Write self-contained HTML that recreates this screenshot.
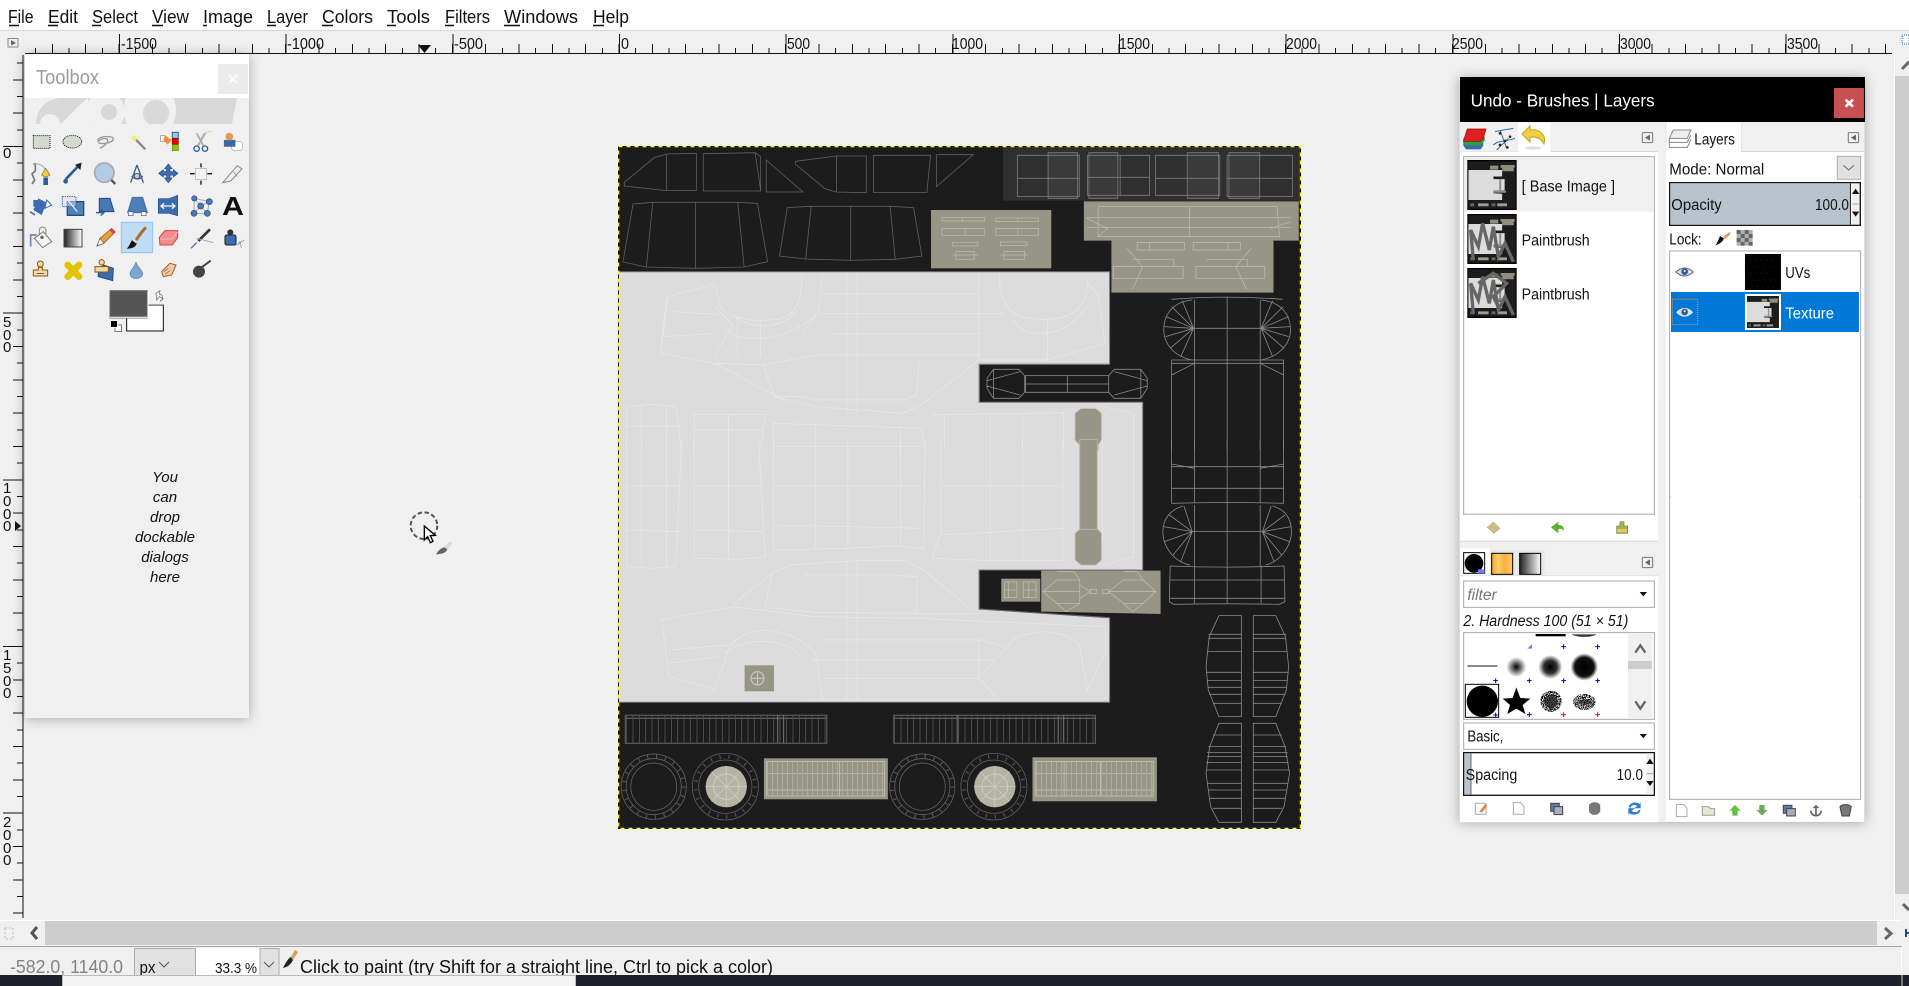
<!DOCTYPE html>
<html><head><meta charset="utf-8"><title>GIMP</title>
<style>
html,body{margin:0;padding:0;width:1909px;height:986px;overflow:hidden;background:#f0f0f0}
svg{display:block;position:absolute;left:0;top:0}
text{font-family:"Liberation Sans",sans-serif;fill:#111}
.w *{vector-effect:non-scaling-stroke}
.w{fill:none}
.r text{font-size:16px}
.v text{font-size:15px}
.m text{font-size:18px}
.d text{font-size:46px}
.lt{stroke:#ebebeb;stroke-width:.6}
</style></head><body>
<svg width="1909" height="986" viewBox="0 0 1909 986" xmlns="http://www.w3.org/2000/svg">
<defs>
<filter id="sh" x="-15%" y="-15%" width="130%" height="130%"><feDropShadow dx="0" dy="1" stdDeviation="6" flood-color="#000" flood-opacity=".3"/></filter>
<filter id="nz" x="0" y="0" width="100%" height="100%"><feTurbulence type="fractalNoise" baseFrequency=".35" numOctaves="2" seed="4"/><feColorMatrix values="0 0 0 0 0 0 0 0 0 0 0 0 0 0 0 0 0 0 14 -6.200"/><feComposite in2="SourceGraphic" operator="in"/></filter>
<linearGradient id="gr" x1="0" x2="1" y1="0" y2="0"><stop offset="0" stop-color="#222"/><stop offset="1" stop-color="#fff"/></linearGradient>
<linearGradient id="or" x1="0" x2="1"><stop offset="0" stop-color="#f7a020"/><stop offset=".3" stop-color="#ffd070"/><stop offset=".6" stop-color="#f9b040"/><stop offset="1" stop-color="#ffc860"/></linearGradient>
<radialGradient id="b1"><stop offset="0" stop-color="#000"/><stop offset=".35" stop-color="#555"/><stop offset="1" stop-color="#fff"/></radialGradient>
<radialGradient id="b2"><stop offset="0" stop-color="#000"/><stop offset=".55" stop-color="#333"/><stop offset="1" stop-color="#fff"/></radialGradient>
<radialGradient id="b3"><stop offset="0" stop-color="#000"/><stop offset=".7" stop-color="#111"/><stop offset="1" stop-color="#fff"/></radialGradient>
<symbol id="th" viewBox="0 0 49 49">
<rect width="49" height="49" fill="#1c1c1c"/>
<path d="M0 9H35V15.700H26V18.400H37.600V30.400H26V33L35 33.600V40H0Z" fill="#dcdcdc"/>
<path d="M22.500 4.400H31V8.600H22.500ZM33.400 3.800H48V6.600H47V10.300H35V6.600H33.400Z" fill="#8f8d7e"/>
<rect x="32" y="18.600" width="2" height="11.500" fill="#8f8d7e"/>
<path d="M26 31.500H39" stroke="#8f8d7e" stroke-width="2" fill="none"/>
<path d="M10 45H21M30 45H40" stroke="#a09e8e" stroke-width="3"/>
<path d="M2 45H6M24 45H28" stroke="#666" stroke-width="3"/>
</symbol>
</defs>

<!-- menu bar -->
<rect width="1909" height="30" fill="#fff"/>
<rect y="30" width="1909" height="1" fill="#d8d8d8"/>
<g class="m">
<text x="8" y="23" textLength="25.500" lengthAdjust="spacingAndGlyphs">File</text>
<text x="48" y="23" textLength="30" lengthAdjust="spacingAndGlyphs">Edit</text>
<text x="92" y="23" textLength="46" lengthAdjust="spacingAndGlyphs">Select</text>
<text x="152" y="23" textLength="37" lengthAdjust="spacingAndGlyphs">View</text>
<text x="203" y="23" textLength="50" lengthAdjust="spacingAndGlyphs">Image</text>
<text x="267" y="23" textLength="41" lengthAdjust="spacingAndGlyphs">Layer</text>
<text x="322" y="23" textLength="51" lengthAdjust="spacingAndGlyphs">Colors</text>
<text x="387" y="23" textLength="43" lengthAdjust="spacingAndGlyphs">Tools</text>
<text x="445" y="23" textLength="45" lengthAdjust="spacingAndGlyphs">Filters</text>
<text x="504" y="23" textLength="74" lengthAdjust="spacingAndGlyphs">Windows</text>
<text x="593" y="23" textLength="36" lengthAdjust="spacingAndGlyphs">Help</text>
</g>
<path d="M9 25.500H19M48 25.500H58M92 25.500H101M152 25.500H163M203 25.500H207M267 25.500H276M322 25.500H333M387 25.500H396M445 25.500H454M504 25.500H520M593 25.500H604" stroke="#111" stroke-width="1.500"/>

<!-- rulers -->
<g stroke="#111" shape-rendering="crispEdges" fill="none">
<path d="M26 53.500H1892"/>
<path d="M23 55V918" />
<path d="M35.200 50.500H1892" stroke-width="5" stroke-dasharray="1 32.330"/>
<path d="M51.900 48.500H1892" stroke-width="9" stroke-dasharray="1 32.330"/>
<path d="M119 43.500H1892" stroke-width="19" stroke-dasharray="1 165.670"/>
<path d="M20 62.700V918" stroke-width="6" stroke-dasharray="1 32.330"/>
<path d="M18 79.400V918" stroke-width="10" stroke-dasharray="1 32.330"/>
<path d="M13 146V918" stroke-width="20" stroke-dasharray="1 165.670"/>
</g>
<g class="r">
<text x="121" y="49" textLength="36" lengthAdjust="spacingAndGlyphs">-1500</text>
<text x="287" y="49" textLength="37" lengthAdjust="spacingAndGlyphs">-1000</text>
<text x="454" y="49" textLength="29" lengthAdjust="spacingAndGlyphs">-500</text>
<text x="621" y="49" textLength="8" lengthAdjust="spacingAndGlyphs">0</text>
<text x="787" y="49" textLength="23" lengthAdjust="spacingAndGlyphs">500</text>
<text x="952" y="49" textLength="31" lengthAdjust="spacingAndGlyphs">1000</text>
<text x="1119" y="49" textLength="31" lengthAdjust="spacingAndGlyphs">1500</text>
<text x="1286" y="49" textLength="31" lengthAdjust="spacingAndGlyphs">2000</text>
<text x="1452" y="49" textLength="31" lengthAdjust="spacingAndGlyphs">2500</text>
<text x="1620" y="49" textLength="31" lengthAdjust="spacingAndGlyphs">3000</text>
<text x="1787" y="49" textLength="31" lengthAdjust="spacingAndGlyphs">3500</text>
</g>
<path d="M418 45H431L424.500 53Z" fill="#111"/>
<g class="v">
<text x="3" y="158">0</text>
<text x="3" y="327">5</text><text x="3" y="340">0</text><text x="3" y="352">0</text>
<text x="3" y="493">1</text><text x="3" y="506">0</text><text x="3" y="519">0</text><text x="3" y="531">0</text>
<text x="3" y="660">1</text><text x="3" y="673">5</text><text x="3" y="686">0</text><text x="3" y="698">0</text>
<text x="3" y="827">2</text><text x="3" y="840">0</text><text x="3" y="853">0</text><text x="3" y="865">0</text>
</g>
<path d="M8 47V38.500H18V47Z" fill="#eee" stroke="#888"/><path d="M11 40L16 43L11 45.500Z" fill="#666"/>
<path d="M15 521L21 526L15 531Z" fill="#111"/>

<!-- canvas -->
<rect x="618.500" y="146.500" width="682" height="682" fill="#1c1c1c"/>
<path d="M618.400 271.700H1109.600V364.300H979.200V402.300H1142.700V570H979.200V609L1109.600 617.700V702.300H618.400Z" fill="#dcdcdc" stroke="#777" stroke-width="1"/>
<path d="M979.200 570V609L1109.600 617.700" fill="none" stroke="#666"/>

<!-- group A wires -->
<g class="w" transform="translate(600,130) scale(.4591,.3333)">
<rect x="878" y="50" width="647" height="162" fill="#2f2f2f"/>
<g fill="#3a3a3a" stroke="none"><rect x="976" y="68" width="68" height="137"/><rect x="1065" y="68" width="63" height="137"/><rect x="1279" y="68" width="68" height="137"/><rect x="1370" y="68" width="67" height="137"/></g>
<g stroke="#7c7c7c" stroke-width=".8">
<path d="M909 76H1044V200H909ZM976 68H1040V205H976ZM909 145H1044M1062 76H1197V196H1062ZM1065 68V205H1128V68ZM1133 76V196M1062 142H1197M1210 76H1350V196H1210ZM1279 68H1347V205H1279ZM1210 145H1350M1366 76H1508V200H1366ZM1370 68H1437V205H1370ZM1366 145H1508"/>
</g>
<g stroke="#5f5f5f" stroke-width=".8">
<path d="M53 157L118 83L145 72L210 70V182H145L53 168ZM145 72V181M225 71L338 68L350 80V183H225ZM338 68L350 183M362 90L442 186H362ZM426 94L515 78H580V188L515 186L490 176L426 103ZM515 78V186M596 76H720L712 188H596ZM733 74H813L733 170Z"/>
<path d="M50 396L72 222L115 217H300L343 220L365 395L314 411L208 415L101 411ZM115 217L101 411M208 217V415M300 217L314 411M391 378L408 233L460 229H632L683 233L701 378L643 388L546 391L448 387ZM460 229L448 387M546 229V391M632 229L643 388"/>
</g>
<rect x="721" y="240" width="262" height="175" fill="#979585"/>
<path d="M1054 214H1522V332H1467V488H1114V332H1054Z" fill="#979585"/>
<g stroke="#bdbcae" stroke-width=".7">
<path d="M745 262H838V273H745ZM862 264H955V275H862ZM745 296H838V316H745ZM862 296H955V316H862ZM790 262V273M910 264V275M795 296V316M910 296V316M768 337H823V348H768ZM872 336H930V347H872ZM775 365H815V388H775ZM880 365H925V388H880ZM768 375H825M872 375H932"/>
<path d="M1085 230H1475L1480 320H1085ZM1060 262H1505M1060 292H1505M1284 230V320M1060 265L1105 295L1085 320M1505 275L1460 295M1170 338H1273V360H1170ZM1292 338H1395V360H1292ZM1197 338V362M1368 338V362M1118 410H1270V445H1118ZM1298 410H1448V445H1298ZM1160 388H1250V410M1320 388H1410V410M1148 355L1182 410L1160 478M1418 355L1385 410L1408 478M1180 445H1260M1310 445H1385"/>
</g>
<!-- car top -->
<g class="lt">
<path d="M148 500L250 463L262 530C275 560 330 578 370 570C420 570 440 530 440 432M485 432L475 550L440 610M148 500L132 670L250 700L355 705L470 675M160 545L255 553M140 620L250 610M250 530L290 585L250 675M290 555C320 600 400 600 430 540M270 600C320 640 400 640 470 555M538 432V850M560 432V850M485 490H825M480 550H880M500 610H830M825 432V690M870 432C870 540 900 570 975 568C1040 565 1060 520 1062 458L1085 495L1100 640L975 690L830 690M900 570C920 625 1010 635 1060 530M470 675H830M355 705L380 800L470 830L660 850L700 825L825 690M250 700L420 825M380 800L440 800L470 810H660L690 795L695 690M300 560V680M350 570V680M975 568V690M145 500L132 670"/>
<path d="M58 830L110 823L165 830L178 960M58 830V960M90 826V960M145 826V960M205 853H360L350 960M205 853V960M280 853V960M378 880L700 895L708 960M378 880V960M470 885V960M655 892V960M723 855L1010 848V960M750 855V960M850 850V960M920 850V960M1095 830L1162 850V960M55 890H178M205 900H355M378 950H705"/>
</g>
<!-- bar dark -->
<rect x="826" y="703" width="356" height="114" fill="#1c1c1c"/>
<path d="M1110 703H826V817H1182" stroke="#8a8a8a" stroke-width="1"/>
<g stroke="#8a8a8a" stroke-width=".8">
<path d="M843 745L857 718H912L925 737V787L912 805H857L843 775ZM927 737H1108V787H927ZM1108 737L1120 718H1178L1192 745V775L1178 805H1120L1108 787ZM927 762H1108M1018 737V787M843 752L915 725M843 768L915 795M1192 752L1120 725M1192 768L1120 795M857 718V805M1178 718V805"/>
</g>
<path d="M1035 850L1048 836H1080L1092 850V930L1085 945V960H1045V945L1035 930Z" fill="#979585" stroke="#b8b7a8" stroke-width=".8"/>
<!-- right body -->
<g stroke="#8a8a8a" stroke-width=".8">
<path d="M1245 508Q1366 495 1487 508M1290 510C1250 515 1228 550 1228 600C1228 640 1250 680 1290 690M1440 510C1480 515 1504 550 1504 600C1504 640 1480 680 1440 690"/>
<path d="M1293 595L1245 530M1293 595L1233 560M1293 595L1228 590M1293 595L1232 620M1293 595L1242 655M1293 595L1265 680M1293 595L1268 512M1440 595L1488 530M1440 595L1500 560M1440 595L1504 590M1440 595L1500 620M1440 595L1490 655M1440 595L1465 680M1440 595L1465 512"/>
<path d="M1245 690H1489M1245 700H1489M1245 690V960M1295 510V960M1366 500V960M1438 510V960M1489 690V960M1293 595H1440M1245 735L1295 700M1489 735L1438 700"/>
</g>
</g>

<!-- group B wires -->
<g class="w" transform="translate(600,440) scale(.4591,.3333)">
<g class="lt">
<path d="M58 0V380L110 385L165 380L178 0M90 0V380M145 0V380M205 0V355L305 358L360 350L345 0M280 0V358M378 0V330L540 325L640 318L705 325L708 0M470 0V325M540 0V325M655 0V320M742 0V280L723 355L850 362H1008V0M850 0V362M920 0V362M55 138H180M205 138H350M375 138H708M745 138H1008M55 270L178 275M205 270L355 275M378 255L700 265M740 285L1008 265M1095 0V300M1162 0V350L1095 375"/>
<path d="M290 492L375 400L415 375L560 362L660 362L700 385L810 510M380 505L470 517L690 520L820 520M132 540L290 500L470 530L690 535L1100 560V640L1060 755M135 540L150 710L250 748L280 630C300 560 400 540 470 640L485 780M440 780H870L825 715L900 600C950 560 1020 570 1045 620L1062 755M150 630L280 615M150 670L260 650M480 600H830L880 620M460 660H860M490 715H825M538 362V780M560 362V780M825 600V715M270 640C320 590 400 590 440 650M375 400L360 505M690 400V520M445 405H640L690 410"/>
</g>
<rect x="315" y="676" width="64" height="78" fill="#979585"/>
<ellipse cx="343" cy="715" rx="14" ry="20" stroke="#ccc"/><path d="M329 715H357M343 695V735" stroke="#ccc"/>
<!-- bar tan -->
<rect x="874" y="416" width="85" height="69" fill="#979585"/>
<path d="M881 426H908V473H881ZM922 426H950V473H922ZM890 426V473M934 426V473M881 450H908M922 450H950" stroke="#c0bfb1" stroke-width=".7"/>
<path d="M961 392H1221V522L961 515Z" fill="#979585"/>
<path d="M965 455L995 420H1045V490H995ZM995 395H1032L1045 420M995 490L1015 515L1045 490M1045 435L1068 455L1045 475M1068 448H1081V461H1068ZM1095 448H1108V461H1095ZM1108 455L1140 420H1183L1210 455L1183 490H1140ZM1140 395H1170L1183 420M1140 490L1160 515L1183 490M965 455H1045M1108 455H1210" stroke="#c0bfb1" stroke-width=".7"/>
<path d="M1035 280L1048 265H1082V20H1045V265H1082L1092 280V360L1080 375H1048L1035 360Z" fill="#979585" stroke="#b8b7a8" stroke-width=".8"/>
<rect x="1045" y="-2" width="38" height="270" fill="#979585" stroke="#b8b7a8" stroke-width=".8"/>
<!-- right -->
<g stroke="#8a8a8a" stroke-width=".8">
<path d="M1245 0V190M1295 0V190M1366 0V490M1438 0V190M1489 0V190M1245 190Q1366 185 1489 190M1245 80H1489M1245 145H1489M1245 72L1295 85M1489 72L1438 85"/>
<path d="M1270 198C1240 210 1226 240 1226 275C1226 320 1250 365 1285 375M1465 198C1495 210 1506 240 1506 275C1506 320 1480 365 1450 375M1290 275L1272 198M1290 275L1240 225M1290 275L1228 260M1290 275L1230 305M1290 275L1248 345M1290 275L1265 365M1443 275L1462 198M1443 275L1492 225M1443 275L1505 260M1443 275L1502 305M1443 275L1485 345M1443 275L1468 365M1290 275H1443M1295 195V378M1438 195V378"/>
<path d="M1242 378Q1366 385 1490 378L1492 485L1480 493Q1366 490 1250 493L1240 485ZM1295 378V490M1440 378V490M1242 420H1492M1242 475H1492"/>
<path d="M1348 527H1397V830H1348L1325 750L1320 680L1327 590ZM1472 527H1423V830H1472L1495 750L1500 680L1493 590ZM1325 583H1397M1325 595H1397M1322 635H1397M1320 697H1397M1322 722H1397M1325 742H1397M1327 763H1397M1335 790H1397M1423 583H1495M1423 595H1495M1423 635H1497M1423 697H1500M1423 722H1497M1423 742H1495M1423 763H1493M1423 790H1485"/>
<path d="M1348 850H1397V1147H1348L1330 1100L1320 1000L1328 920ZM1472 850H1423V1147H1472L1490 1100L1502 1000L1492 920ZM1335 885H1397M1325 920H1397M1322 938H1397M1322 950H1397M1320 968H1397M1320 990H1397M1322 1030H1397M1325 1050H1397M1328 1075H1397M1335 1105H1397M1423 885H1485M1423 920H1495M1423 938H1498M1423 950H1498M1423 968H1500M1423 990H1502M1423 1030H1498M1423 1050H1496M1423 1075H1492M1423 1105H1485"/>
</g>
<!-- wheels -->
<g stroke="#6a6a6a" stroke-width=".7">
<ellipse cx="117" cy="1040" rx="71" ry="98"/><ellipse cx="117" cy="1040" rx="60" ry="84"/><ellipse cx="117" cy="1040" rx="50" ry="71"/>
<ellipse cx="702" cy="1040" rx="71" ry="98"/><ellipse cx="702" cy="1040" rx="60" ry="84"/><ellipse cx="702" cy="1040" rx="50" ry="71"/>
<ellipse cx="273" cy="1040" rx="72" ry="100"/><ellipse cx="273" cy="1040" rx="58" ry="80"/>
<ellipse cx="858" cy="1040" rx="72" ry="100"/><ellipse cx="858" cy="1040" rx="58" ry="80"/>
</g>
<g fill="none" stroke="#5a5a5a">
<ellipse cx="117" cy="1040" rx="65" ry="91" stroke-width="4" stroke-dasharray="1 8"/>
<ellipse cx="702" cy="1040" rx="65" ry="91" stroke-width="4" stroke-dasharray="1 8"/>
<ellipse cx="273" cy="1040" rx="65" ry="90" stroke-width="4" stroke-dasharray="1 8"/>
<ellipse cx="858" cy="1040" rx="65" ry="90" stroke-width="4" stroke-dasharray="1 8"/>
</g>
<ellipse cx="275" cy="1040" rx="45" ry="62" fill="#b5b3a3"/><ellipse cx="860" cy="1040" rx="45" ry="62" fill="#b5b3a3"/>
<path d="M275 978V1102M230 1040H320M243 995L307 1085M307 995L243 1085M860 978V1102M815 1040H905M828 995L892 1085M892 995L828 1085" stroke="#d0cec0" stroke-width=".7"/>
<ellipse cx="275" cy="1040" rx="28" ry="38" stroke="#d0cec0"/><ellipse cx="860" cy="1040" rx="28" ry="38" stroke="#d0cec0"/>
<rect x="357" y="955" width="270" height="123" fill="#979585"/>
<rect x="942" y="952" width="271" height="132" fill="#979585"/>
<path d="M363 965H620V1068H363ZM363 1050H620M363 1000H620M522 965V1068M948 965H1205V1068H948ZM948 1050H1205M948 1000H1205M1011 965V1068M1090 965V1068" stroke="#c9c8ba" stroke-width=".7"/>
<rect x="55" y="826" width="439" height="84" stroke="#666"/>
<rect x="640" y="826" width="439" height="84" stroke="#666"/>
<path d="M55 835H494M640 835H1079M387 826V910M400 826V910M778 826V910M998 826V910M1010 826V910" stroke="#777"/>
</g>
<!-- dash fills -->
<g fill="none" shape-rendering="crispEdges">
<path d="M626 729.300H826.500M894 729.300H1095" stroke="#4a4a4a" stroke-width="27" stroke-dasharray="1 5.400"/>
<path d="M767 779H884M1036 779H1153" stroke="#aeac9c" stroke-width="34" stroke-dasharray="1 4"/>
</g>
<!-- marching ants -->
<rect x="618.500" y="146.500" width="682" height="682" fill="none" stroke="#000" stroke-width="1"/>
<rect x="618.500" y="146.500" width="682" height="682" fill="none" stroke="#ff0" stroke-width="1.500" stroke-dasharray="4 4"/>

<!-- cursor -->
<g transform="translate(370,490) scale(.3333)">
<circle cx="162" cy="107" r="40" fill="none" stroke="#555" stroke-width="6" stroke-dasharray="13 8"/>
<path d="M163 108V150L173 140L181 158L189 154L181 137L196 136Z" fill="#fff" stroke="#000" stroke-width="4"/>
<path d="M198 193C205 180 215 172 225 172L232 178C228 188 218 192 198 193Z" fill="#666"/>
<path d="M225 172L240 155L245 160L232 178Z" fill="#ddd" stroke="#bbb"/>
</g>

<!-- toolbox -->
<rect x="25" y="54" width="224" height="664" fill="#f0f0f0" filter="url(#sh)"/>
<!-- wilber -->
<path d="M36 124C36 108 48 98 62 98H237L232 124Z" fill="#d8d8d8"/>
<circle cx="50" cy="124" r="10" fill="#f0f0f0"/>
<path d="M60 124C68 118 75 108 88 98V124Z" fill="#f0f0f0"/>
<circle cx="105" cy="112" r="20" fill="#f0f0f0"/>
<circle cx="109" cy="112" r="8" fill="#d8d8d8"/>
<ellipse cx="150" cy="110" rx="26" ry="30" fill="#f0f0f0"/>
<circle cx="156" cy="113" r="13" fill="#d8d8d8"/>
<rect x="25" y="124" width="224" height="4" fill="#f0f0f0"/>
<rect x="25" y="54" width="224" height="44" fill="#fff"/>
<rect x="25" y="53" width="224" height="1" fill="#111"/>
<text x="36" y="84" font-size="20" style="fill:#9c9c9c" textLength="63" lengthAdjust="spacingAndGlyphs">Toolbox</text>
<rect x="218" y="64" width="30" height="30" fill="#ebebeb"/>
<path d="M229 75L237 83M237 75L229 83" stroke="#fafafa" stroke-width="2"/>

<!-- tool icons in 3x coords -->
<g transform="translate(0,100) scale(.3333)">
<!-- row 1 -->
<rect x="100" y="107" width="50" height="38" fill="#d5d8d0" stroke="#111" stroke-width="3" stroke-dasharray="3 3"/>
<ellipse cx="217" cy="125" rx="28" ry="19" fill="#d5d8d0" stroke="#111" stroke-width="3" stroke-dasharray="3 3"/>
<path d="M293 122C295 108 335 106 340 115C342 128 310 132 300 130C290 128 298 115 318 116C330 118 320 135 300 145" fill="none" stroke="#999" stroke-width="4"/>
<path d="M405 116L436 148" stroke="#888" stroke-width="7"/><circle cx="403" cy="114" r="8" fill="#f7ec6a"/>
<rect x="482" y="107" width="14" height="18" fill="#fff" stroke="#888" stroke-width="2"/>
<path d="M495 106L515 120L503 134L490 120Z" fill="#f09030"/>
<rect x="517" y="97" width="18" height="18" fill="#9cc" stroke="#2a5f9e" stroke-width="3"/>
<rect x="517" y="116" width="18" height="17" fill="#e00" stroke="#a00" stroke-width="2"/>
<rect x="517" y="134" width="18" height="18" fill="#8c0" stroke="#5a8a00" stroke-width="2"/>
<path d="M590 100L612 140M616 100L592 140" stroke="#aaa" stroke-width="5"/>
<circle cx="590" cy="146" r="8" fill="none" stroke="#2a5f9e" stroke-width="4"/><circle cx="615" cy="146" r="8" fill="none" stroke="#2a5f9e" stroke-width="4"/>
<path d="M603 115C606 100 618 96 636 94" fill="none" stroke="#e08a20" stroke-width="2" stroke-dasharray="3 2"/>
<rect x="695" y="125" width="32" height="27" rx="8" fill="#fff" stroke="#aaa" stroke-width="2"/>
<rect x="672" y="120" width="34" height="20" fill="#3a6aa8" stroke="#a44" stroke-dasharray="2 2"/>
<circle cx="688" cy="110" r="11" fill="#e89a40" stroke="#a66" stroke-dasharray="2 2"/>
<!-- row 2 -->
<path d="M100 192H106V212L96 222L104 240L96 252" fill="none" stroke="#777" stroke-width="5"/><path d="M100 195C115 188 130 195 135 208" fill="none" stroke="#aaa" stroke-width="3"/>
<path d="M137 205L150 225L137 232L125 225Z" fill="#f0d030" stroke="#666" stroke-width="2"/><rect x="130" y="233" width="14" height="22" fill="#2a5f9e"/>
<path d="M238 195L197 238" stroke="#2a5f9e" stroke-width="8"/><path d="M228 195L240 207L243 190Z" fill="#222" stroke="#222" stroke-width="3"/><circle cx="197" cy="244" r="7" fill="#2a5f9e"/>
<circle cx="313" cy="218" r="29" fill="#b4cbe8" stroke="#aaa" stroke-width="5"/><path d="M334 240L346 252" stroke="#555" stroke-width="7"/>
<path d="M411 195L392 248M411 195L430 248M395 228C405 240 420 240 428 228" fill="none" stroke="#3a5f8f" stroke-width="4"/><circle cx="411" cy="228" r="8" fill="#ccd" stroke="#555" stroke-width="3"/>
<path d="M505 192L516 206H510V215H520V209L534 220L520 231V225H510V234H516L505 248L494 234H500V225H490V231L476 220L490 209V215H500V206H494Z" fill="#3d70b2" stroke="#1f4a86" stroke-width="2"/>
<rect x="587" y="205" width="33" height="33" fill="#f4f4f4" stroke="#aaa" stroke-width="2"/>
<path d="M603 190V202M603 242V254M570 221H584M622 221H636" stroke="#111" stroke-width="4"/>
<path d="M668 248L712 197L726 207L692 243Z" fill="#eee" stroke="#888" stroke-width="3"/><path d="M700 215L712 230" stroke="#888" stroke-width="2"/>
<!-- row 3 -->
<path d="M115 295L140 308L125 345L100 330Z" fill="#3c6cae"/><path d="M100 300H125V320H100Z" fill="#3c6cae"/><path d="M140 300L155 315L135 325Z" fill="#fff" stroke="#3c6cae" stroke-width="3"/><path d="M90 335L105 345" stroke="#3c6cae" stroke-width="5"/>
<rect x="202" y="305" width="49" height="41" fill="#5080b8" stroke="#1f4a86" stroke-width="4"/>
<rect x="187" y="290" width="41" height="30" fill="#dde" fill-opacity=".5" stroke="#2a5f9e" stroke-width="3" stroke-dasharray="4 3"/><path d="M205 303L232 335" stroke="#fff" stroke-width="3"/>
<path d="M298 295H330L342 335H298Z" fill="#4a78b4" stroke="#1f4a86" stroke-width="3"/><path d="M288 338H312M302 328L312 338L302 347" fill="none" stroke="#2a5f9e" stroke-width="4"/>
<path d="M397 292H428L442 338H383Z" fill="#4f7db8" stroke="#4a6f9f" stroke-width="3"/><rect x="385" y="335" width="14" height="12" fill="#fff" stroke="#2a5f9e" stroke-width="2"/><rect x="424" y="335" width="14" height="12" fill="#fff" stroke="#2a5f9e" stroke-width="2"/>
<path d="M475 296H508L533 286V347L508 340H475Z" fill="#3c6cae" stroke="#1f4a86" stroke-width="2"/><path d="M483 318H525M492 310L483 318L492 326M516 310L525 318L516 326" fill="none" stroke="#fff" stroke-width="4"/>
<path d="M583 295L628 305L622 340L582 340ZM583 295L602 318L628 305M602 318L622 340M602 318L582 340" fill="none" stroke="#aaa" stroke-width="3"/>
<g fill="#4a78b4" stroke="#1f4a86" stroke-width="2"><circle cx="583" cy="295" r="8"/><circle cx="628" cy="305" r="9"/><circle cx="602" cy="318" r="9"/><circle cx="582" cy="340" r="9"/><circle cx="622" cy="340" r="9"/></g>
<text x="666" y="345" font-size="78" font-weight="bold" style="fill:#111" textLength="66" lengthAdjust="spacingAndGlyphs">A</text>
<!-- row 4 -->
<path d="M92 440V405H110" fill="none" stroke="#6a8ab8" stroke-width="5"/>
<path d="M103 415L130 395L155 425L128 443Z" fill="#f4f4f4" stroke="#777" stroke-width="3"/><path d="M118 405V390C120 378 135 378 138 390V405" fill="none" stroke="#888" stroke-width="3"/><circle cx="126" cy="412" r="5" fill="#666"/>
<rect x="192" y="388" width="54" height="53" fill="url(#gr)" stroke="#444" stroke-width="3"/>
<path d="M291 438L300 415L335 385L346 396L312 430Z" fill="#e0a040" stroke="#8a5a10" stroke-width="2"/><path d="M335 385L346 396L340 402L329 391Z" fill="#e35"/><path d="M291 438L300 415L312 430Z" fill="#fff" stroke="#555" stroke-width="2"/>
<rect x="364" y="367" width="94" height="91" fill="#bfdcf5" stroke="#8ec5f5" stroke-width="3"/>
<path d="M438 382C428 392 415 410 405 425" stroke="#ab6b2a" stroke-width="9" fill="none"/>
<path d="M380 446C394 446 408 442 410 430L397 420C392 425 388 440 380 446Z" fill="#111"/><rect x="397" y="418" width="14" height="8" fill="#ddd" transform="rotate(40 404 422)"/>
<path d="M478 412L495 392H533V413L517 435H480Z" fill="#f28d8d" stroke="#d84040" stroke-width="3"/><path d="M480 417H516L533 396" fill="none" stroke="#fbd" stroke-width="2"/>
<path d="M630 388L595 423" stroke="#333" stroke-width="8"/><path d="M590 415L640 428" stroke="#aaa" stroke-width="3"/><path d="M590 428L573 445" stroke="#4a78b4" stroke-width="4"/>
<rect x="675" y="405" width="33" height="30" rx="5" fill="#3c6cae" stroke="#223" stroke-width="3"/><circle cx="691" cy="397" r="9" fill="#333"/>
<path d="M710 435L732 420M718 425L725 443" stroke="#2a5f9e" stroke-width="3" stroke-dasharray="3 3"/>
<!-- row 5 -->
<circle cx="121" cy="492" r="9" fill="#f0d8a8" stroke="#8a5a10" stroke-width="3"/><path d="M115 502H127V510H143V528H100V510H115Z" fill="#f0d8a8" stroke="#8a5a10" stroke-width="3"/><path d="M110 520H132" stroke="#333" stroke-width="2"/>
<path d="M203 495L237 530M237 495L203 530" stroke="#e2c400" stroke-width="20" stroke-linecap="round"/>
<path d="M310 495L340 505L338 542L295 530V515Z" fill="#3c6cae" stroke="#1f4a86" stroke-width="3"/>
<circle cx="305" cy="487" r="8" fill="#f0d8a8" stroke="#8a5a10" stroke-width="3"/><path d="M285 500H325V516H285Z" fill="#f0d8a8" stroke="#8a5a10" stroke-width="3"/>
<path d="M408 487C402 505 390 510 390 522C392 540 424 540 428 522C428 510 414 505 408 487Z" fill="#7ea6d0" stroke="#4a78b4" stroke-width="2"/>
<path d="M485 515L510 490L528 495L515 525L490 530Z" fill="#eec8a8" stroke="#a06020" stroke-width="3"/><path d="M492 515L505 505M495 522L510 512" stroke="#a06020" stroke-width="2"/>
<circle cx="597" cy="515" r="18" fill="#444"/><path d="M605 502L632 482" stroke="#444" stroke-width="6"/>
<!-- fg/bg -->
<rect x="380" y="615" width="110" height="78" fill="#fff" stroke="#111" stroke-width="3"/>
<rect x="380" y="612" width="110" height="2" fill="#fff"/>
<rect x="330" y="572" width="112" height="82" fill="#555" stroke="#6e6e6e" stroke-width="3"/>
<path d="M330 652H444V574" fill="none" stroke="#fff" stroke-width="3"/>
<path d="M468 580L480 572L478 582C492 585 490 600 480 604L490 596L478 590L470 600Z" fill="#eee" stroke="#666" stroke-width="2"/>
<rect x="345" y="675" width="20" height="20" fill="#fff" stroke="#444" stroke-width="2"/>
<rect x="332" y="662" width="20" height="20" fill="#000" stroke="#fff" stroke-width="2"/>
</g>

<g style="font-style:italic" font-size="15" text-anchor="middle">
<text x="165" y="482">You</text><text x="165" y="502">can</text><text x="165" y="522">drop</text><text x="165" y="542">dockable</text><text x="165" y="562">dialogs</text><text x="165" y="582">here</text>
</g>

<!-- right column -->
<rect x="1894" y="50" width="1" height="871" fill="#fff"/>
<rect x="1895" y="76" width="14" height="818" fill="#cdcdcd"/>
<path d="M1902 69L1908 63L1909 64" fill="none" stroke="#666" stroke-width="3"/>
<path d="M1903 904L1909 910" fill="none" stroke="#666" stroke-width="3"/>
<rect x="1902" y="35" width="7" height="9" fill="#fff" stroke="#2a5f9e" stroke-dasharray="1 1"/>

<!-- bottom bar -->
<rect y="920" width="1902" height="1" fill="#fff"/>
<rect x="45" y="921" width="1832" height="24" fill="#cdcdcd"/>
<path d="M37 927L32 933L37 939" fill="none" stroke="#555" stroke-width="3"/>
<path d="M1885 928L1891 933.500L1885 939" fill="none" stroke="#666" stroke-width="3"/>
<path d="M1906 933H1909M1906 929V937" stroke="#1f4a86" stroke-width="2"/>
<rect x="5" y="928" width="8" height="11" fill="none" stroke="#bbb" stroke-dasharray="2 2"/>
<rect y="946" width="1902" height="1" fill="#a5a5a5"/>
<rect x="1901" y="947" width="1" height="28" fill="#fff"/>
<text x="10" y="973" font-size="18" style="fill:#828282" textLength="113" lengthAdjust="spacingAndGlyphs">-582.0, 1140.0</text>
<rect x="134.500" y="948.500" width="61" height="30" fill="#e1e1e1" stroke="#adadad"/>
<text x="139.500" y="973" font-size="17" textLength="16" lengthAdjust="spacingAndGlyphs">px</text>
<path d="M159 962L164 967L169 962" fill="none" stroke="#555"/>
<rect x="196" y="948" width="64" height="30" fill="#fff"/>
<rect x="260" y="948.500" width="19" height="30" fill="#e1e1e1" stroke="#adadad"/>
<text x="215" y="973" font-size="15" textLength="42" lengthAdjust="spacingAndGlyphs">33.3 %</text>
<path d="M264 962L269 967L274 962" fill="none" stroke="#555"/>
<path d="M283 968C287 960 289 958 291 957L293 960C291 964 288 967 283 968Z" fill="#222"/><path d="M291 957L295 950L298 952L293 960Z" fill="#d8a060"/>
<text x="300" y="973" font-size="18" textLength="473" lengthAdjust="spacingAndGlyphs">Click to paint (try Shift for a straight line, Ctrl to pick a color)</text>

<!-- taskbar -->
<rect y="975" width="1909" height="11" fill="#1f1f2a"/>
<rect x="62" y="975" width="514" height="11" fill="#f3f3f3"/>
<rect x="62" y="975" width="514" height="1" fill="#bbb"/>
<rect x="62" y="975" width="1" height="11" fill="#bbb"/><rect x="575" y="975" width="1" height="11" fill="#bbb"/>
<rect x="1901" y="975" width="2" height="11" fill="#777"/>
<text x="1743" y="997" font-size="16" style="fill:#fff" textLength="70" lengthAdjust="spacingAndGlyphs">10:33 PM</text>

<!-- dock window -->
<rect x="1459" y="77" width="406" height="745" fill="#f0f0f0" filter="url(#sh)"/>
<rect x="1459" y="77" width="406" height="45" fill="#000"/>
<g class="d" transform="translate(1450,70) scale(.3333)">
<text x="62" y="110" font-size="54" style="font-size:54px;fill:#fff" textLength="552" lengthAdjust="spacingAndGlyphs">Undo - Brushes | Layers</text>
<rect x="1152" y="54" width="90" height="90" fill="#c75050"/>
<path d="M1187 89L1209 110M1209 89L1187 110" stroke="#fff" stroke-width="8"/>
<!-- left panel -->
<rect x="30" y="245" width="595" height="1300" fill="#fff"/>
<rect x="30" y="243" width="595" height="3" fill="#d8d8d8"/>
<rect x="30" y="160" width="90" height="85" fill="#f0f0f0"/>
<rect x="122" y="160" width="80" height="85" fill="#f0f0f0"/>
<rect x="204" y="158" width="97" height="88" fill="#fff"/>
<path d="M40 214V226L48 238H92L100 226V214Z" fill="#3a6ab0"/><path d="M40 204V216L48 226H92L104 212V200Z" fill="#30a040"/>
<path d="M52 177H108L100 205L92 214H40Z" fill="#e02020" stroke="#a00" stroke-width="2"/>
<path d="M135 185L160 180L190 175M130 225C145 210 170 215 195 205M140 240L175 205M150 180L170 235" fill="none" stroke="#3a6a9e" stroke-width="3"/>
<g fill="#222"><circle cx="150" cy="190" r="4"/><circle cx="165" cy="213" r="4"/><circle cx="180" cy="200" r="4"/><circle cx="150" cy="225" r="4"/><circle cx="172" cy="232" r="4"/></g>
<path d="M216 192L240 168V180C268 175 290 195 282 222C272 204 258 198 240 202V216Z" fill="#f4d040" stroke="#c0a020" stroke-width="3"/>
<ellipse cx="250" cy="234" rx="24" ry="5" fill="#ddd"/>
<rect x="577" y="188" width="31" height="30" rx="3" fill="#f0f0f0" stroke="#777" stroke-width="3"/><path d="M600 194V212L585 203Z" fill="#666"/>
<!-- undo list -->
<rect x="41" y="260" width="572" height="1344" fill="#fff" stroke="#a8a8a8" stroke-width="3"/>
<rect x="43" y="262" width="567" height="163" fill="#f0f0f0"/>
<g>
<rect x="52" y="270" width="148" height="150" fill="#000"/><use href="#th" x="55" y="273" width="142" height="144"/>
<rect x="52" y="432" width="148" height="150" fill="#000"/><use href="#th" x="55" y="435" width="142" height="144"/>
<path d="M70 570L62 480L85 530L98 460L118 540L130 470L145 560L165 520L190 575" fill="none" stroke="#666" stroke-width="10"/>
<rect x="52" y="594" width="148" height="150" fill="#000"/><use href="#th" x="55" y="597" width="142" height="144"/>
<path d="M70 732L62 640L85 690L98 620L118 700L130 630L145 720L165 680L190 735M85 640L130 610L170 640L130 680L150 720" fill="none" stroke="#666" stroke-width="10"/>
</g>
<text x="215" y="364" textLength="280" lengthAdjust="spacingAndGlyphs">[ Base Image ]</text>
<text x="215" y="526" textLength="204" lengthAdjust="spacingAndGlyphs">Paintbrush</text>
<text x="215" y="688" textLength="204" lengthAdjust="spacingAndGlyphs">Paintbrush</text>
<!-- right panel -->
<rect x="648" y="245" width="595" height="2000" fill="#fff"/>
<rect x="648" y="243" width="595" height="3" fill="#d8d8d8"/>
<rect x="648" y="158" width="225" height="88" fill="#fff"/>
<rect x="647" y="158" width="2" height="88" fill="#ddd"/><rect x="873" y="158" width="2" height="88" fill="#ddd"/>
<path d="M670 180H723L712 205H658Z" fill="#eee" stroke="#888" stroke-width="3"/><path d="M658 205V217H712L723 195M658 217V232H712L723 208" fill="none" stroke="#888" stroke-width="3"/>
<text x="733" y="223" textLength="122" lengthAdjust="spacingAndGlyphs">Layers</text>
<rect x="1195" y="188" width="31" height="30" rx="3" fill="#f0f0f0" stroke="#777" stroke-width="3"/><path d="M1218 194V212L1203 203Z" fill="#666"/>
<text x="658" y="313" textLength="285" lengthAdjust="spacingAndGlyphs">Mode: Normal</text>
<rect x="1162" y="259" width="70" height="69" fill="#e1e1e1" stroke="#adadad" stroke-width="3"/>
<path d="M1180 286L1196 300L1212 286" fill="none" stroke="#666" stroke-width="3"/>
<rect x="659" y="338" width="572" height="128" fill="#fff" stroke="#111" stroke-width="4"/>
<rect x="661" y="340" width="539" height="124" fill="#b8c4cd"/>
<rect x="1200" y="340" width="3" height="124" fill="#222"/>
<rect x="1206" y="342" width="22" height="120" fill="#f0f0f0"/>
<path d="M1206 372H1228L1217 356ZM1206 425H1228L1217 440Z" fill="#111"/><path d="M1207 402H1228" stroke="#aaa" stroke-width="3"/>
<text x="664" y="420" textLength="151" lengthAdjust="spacingAndGlyphs">Opacity</text>
<text x="1095" y="420" textLength="102" lengthAdjust="spacingAndGlyphs">100.0</text>
<text x="658" y="523" textLength="97" lengthAdjust="spacingAndGlyphs">Lock:</text>
<path d="M796 526C810 522 818 515 822 505L810 498C805 510 802 520 796 526Z" fill="#111"/><path d="M820 500L838 486L842 492L825 508Z" fill="#e0a060"/>
<rect x="860" y="480" width="48" height="47" fill="#b0b0b0"/>
<path d="M860 480h12v12h-12zM884 480h12v12h-12zM872 492h12v12h-12zM896 492h12v12h-12zM860 504h12v12h-12zM884 504h12v12h-12zM872 516h12v11h-12zM896 516h12v11h-12z" fill="#666"/>
<rect x="659" y="543" width="573" height="1255" fill="#fff" stroke="#a8a8a8" stroke-width="3"/>
<path d="M678 606C695 590 712 590 730 606C712 622 695 622 678 606Z" fill="#dde" stroke="#666" stroke-width="3"/><circle cx="704" cy="605" r="10" fill="#2a5f9e"/><circle cx="704" cy="603" r="3" fill="#fff"/>
<rect x="885" y="552" width="108" height="108" fill="#000"/>
<path d="M900 570H980M910 590H975M900 610H960M910 630H985M905 650H970" stroke="#222" stroke-width="3" stroke-dasharray="3 13"/>
<text x="1006" y="624" textLength="75" lengthAdjust="spacingAndGlyphs">UVs</text>
<rect x="663" y="666" width="564" height="120" fill="#0078d7"/>
<rect x="667" y="688" width="76" height="76" fill="none" stroke="#f09a30" stroke-width="3" stroke-dasharray="3 3"/>
<path d="M680 727C695 711 712 711 728 727C712 743 695 743 680 727Z" fill="#dde" stroke="#fff" stroke-width="2"/><circle cx="704" cy="726" r="10" fill="#2a5f9e"/><circle cx="704" cy="724" r="3" fill="#fff"/>
<rect x="885" y="672" width="108" height="108" fill="#fff"/><use href="#th" x="891" y="678" width="96" height="96"/>
<text x="1006" y="745" style="fill:#fff" textLength="146" lengthAdjust="spacingAndGlyphs">Texture</text>
</g>

<g class="d" transform="translate(1450,500) scale(.3333)">
<!-- mask bottom of undo + brushes -->
<rect x="30" y="45" width="595" height="78" fill="#fff"/>
<rect x="30" y="123" width="595" height="103" fill="#f0f0f0"/>
<rect x="30" y="122" width="595" height="3" fill="#d4d4d4"/>
<rect x="40" y="41" width="574" height="3" fill="#a8a8a8"/>
<rect x="625" y="-300" width="23" height="1265" fill="#f0f0f0"/>
<path d="M112 82L130 66L150 85L132 100Z" fill="#cdbf80" stroke="#999" stroke-width="2" stroke-dasharray="3 2"/>
<path d="M303 82L325 65V75C340 75 343 85 341 92C335 85 328 86 325 87V100Z" fill="#60b030"/>
<path d="M510 65H522V78H533V100H500V78H510Z" fill="#b0b050" stroke="#6a8a40" stroke-width="2"/><rect x="502" y="88" width="29" height="8" fill="#e8d060"/>
<!-- brushes tabs -->
<rect x="30" y="145" width="90" height="82" fill="#fff"/>
<rect x="122" y="150" width="76" height="76" fill="#e8e8e8"/>
<rect x="200" y="150" width="84" height="76" fill="#e8e8e8"/>
<rect x="41" y="158" width="63" height="62" fill="#fff" stroke="#000" stroke-width="3"/><circle cx="72" cy="190" r="28" fill="#000"/>
<rect x="84" y="208" width="20" height="12" fill="#77f"/>
<rect x="125" y="160" width="63" height="63" fill="url(#or)" stroke="#000" stroke-width="3"/>
<rect x="209" y="160" width="63" height="63" fill="url(#gr)" stroke="#000" stroke-width="3"/>
<rect x="577" y="172" width="31" height="31" rx="3" fill="#f0f0f0" stroke="#777" stroke-width="3"/><path d="M600 178V197L585 187Z" fill="#666"/>
<rect x="30" y="227" width="595" height="740" fill="#fff"/>
<rect x="30" y="226" width="595" height="2" fill="#ddd"/>
<rect x="41" y="243" width="572" height="79" fill="#fff" stroke="#a8a8a8" stroke-width="3"/>
<text x="52" y="300" style="font-style:italic;fill:#777" textLength="88" lengthAdjust="spacingAndGlyphs">filter</text>
<path d="M569 276H591L580 289Z" fill="#111"/>
<text x="40" y="378" style="font-style:italic" textLength="495" lengthAdjust="spacingAndGlyphs">2. Hardness 100 (51 × 51)</text>
<rect x="41" y="398" width="572" height="260" fill="#fff" stroke="#a8a8a8" stroke-width="3"/>
<rect x="534" y="402" width="72" height="252" fill="#f0f0f0"/>
<rect x="534" y="483" width="72" height="24" fill="#cdcdcd"/>
<path d="M556 458L571 436L586 458M556 604L571 626L586 604" fill="none" stroke="#666" stroke-width="7"/>
<rect x="257" y="402" width="90" height="7" fill="#000"/><path d="M365 403H440C425 413 380 413 365 403Z" fill="#333"/>
<path d="M232 446L246 432V446Z" fill="#8080f0"/>
<path d="M52 498H142" stroke="#111" stroke-width="3"/>
<circle cx="199" cy="501" r="30" fill="url(#b1)"/><circle cx="301" cy="501" r="36" fill="url(#b2)"/><circle cx="403" cy="501" r="41" fill="url(#b3)"/>
<rect x="46" y="553" width="100" height="99" fill="#fff" stroke="#000" stroke-width="3"/><circle cx="97" cy="604" r="47" fill="#000"/>
<path d="M199 562L211 594L241 596L218 615L226 642L199 626L172 642L180 615L158 596L188 594Z" fill="#000"/>
<circle cx="303" cy="604" r="32" fill="#000" filter="url(#nz)"/><circle cx="303" cy="604" r="20" fill="#222" opacity=".75"/>
<ellipse cx="403" cy="606" rx="34" ry="24" fill="#000" filter="url(#nz)"/><ellipse cx="405" cy="606" rx="18" ry="9" fill="#222" opacity=".6"/>
<g stroke="#00c" stroke-width="3"><path d="M334 440H348M341 433V447M436 440H450M443 433V447M130 542H144M137 535V549M231 542H245M238 535V549M334 542H348M341 535V549M436 542H450M443 535V549M130 645H144M137 638V652M231 644H245M238 637V651"/></g>
<g stroke="#e00" stroke-width="3"><path d="M334 644H348M341 637V651M436 644H450M443 637V651"/></g>
<rect x="41" y="669" width="572" height="79" fill="#fff" stroke="#a8a8a8" stroke-width="3"/>
<text x="52" y="725" textLength="108" lengthAdjust="spacingAndGlyphs">Basic,</text>
<path d="M569 702H591L580 715Z" fill="#111"/>
<rect x="41" y="758" width="572" height="128" fill="#fff" stroke="#111" stroke-width="4"/>
<rect x="43" y="760" width="19" height="124" fill="#b8c4cd"/><rect x="62" y="760" width="2" height="124" fill="#222"/>
<rect x="589" y="760" width="22" height="124" fill="#f0f0f0"/>
<path d="M589 792H611L600 776ZM589 843H611L600 858Z" fill="#111"/><path d="M590 821H610" stroke="#aaa" stroke-width="3"/>
<text x="47" y="840" textLength="155" lengthAdjust="spacingAndGlyphs">Spacing</text>
<text x="500" y="840" textLength="79" lengthAdjust="spacingAndGlyphs">10.0</text>
<!-- buttons -->
<path d="M76 910H108V943H76Z" fill="#fff" stroke="#aaa" stroke-width="3"/><path d="M88 935L106 912L112 918L95 938Z" fill="#e08040"/>
<path d="M190 908H212L222 920V943H190Z" fill="#fff" stroke="#aaa" stroke-width="3"/>
<rect x="302" y="910" width="26" height="24" fill="#5a7ab0" stroke="#444" stroke-width="3"/><rect x="312" y="920" width="26" height="24" fill="#aab" stroke="#444" stroke-width="3"/>
<path d="M418 915C425 905 442 905 450 915V935C442 947 425 947 418 935Z" fill="#777" stroke="#666" stroke-width="2" stroke-dasharray="3 2"/>
<path d="M536 922C540 905 560 905 570 912L572 905V925H552L562 918C552 912 545 915 542 923ZM572 930C568 945 548 947 538 940L535 945V925H555L545 933C555 938 562 938 566 930Z" fill="#2f7ad0"/>
<!-- layers panel bottom -->
<rect x="648" y="0" width="595" height="965" fill="#fff"/>
<rect x="659" y="-10" width="573" height="908" fill="#fff" stroke="#a8a8a8" stroke-width="3"/>
<rect x="662" y="-12" width="567" height="900" fill="#fff"/>
<path d="M679 914H702L711 925V950H679Z" fill="#fff" stroke="#aaa" stroke-width="3"/>
<path d="M757 920H775L782 926H794V946H757Z" fill="#e8e8c8" stroke="#999" stroke-width="3"/>
<path d="M855 915L872 932H863V947H847V932H838Z" fill="#60c040"/>
<path d="M936 947L953 930H944V915H928V930H919Z" fill="#70a860" stroke="#ccc" stroke-dasharray="3 2"/>
<rect x="1000" y="916" width="26" height="24" fill="#5a7ab0" stroke="#444" stroke-width="3"/><rect x="1010" y="926" width="26" height="22" fill="#aab" stroke="#444" stroke-width="3"/>
<path d="M1098 915V945M1082 932C1084 945 1092 947 1098 947C1104 947 1112 945 1114 932M1090 922H1106" fill="none" stroke="#666" stroke-width="5"/>
<path d="M1170 920C1178 912 1196 912 1204 920L1198 948H1176Z" fill="#777" stroke="#444" stroke-width="3"/>
</g>
<rect x="1459" y="77" width="1" height="745" fill="#ddd"/>
<rect x="1864" y="122" width="1" height="700" fill="#ddd"/>
</svg>
</body></html>
